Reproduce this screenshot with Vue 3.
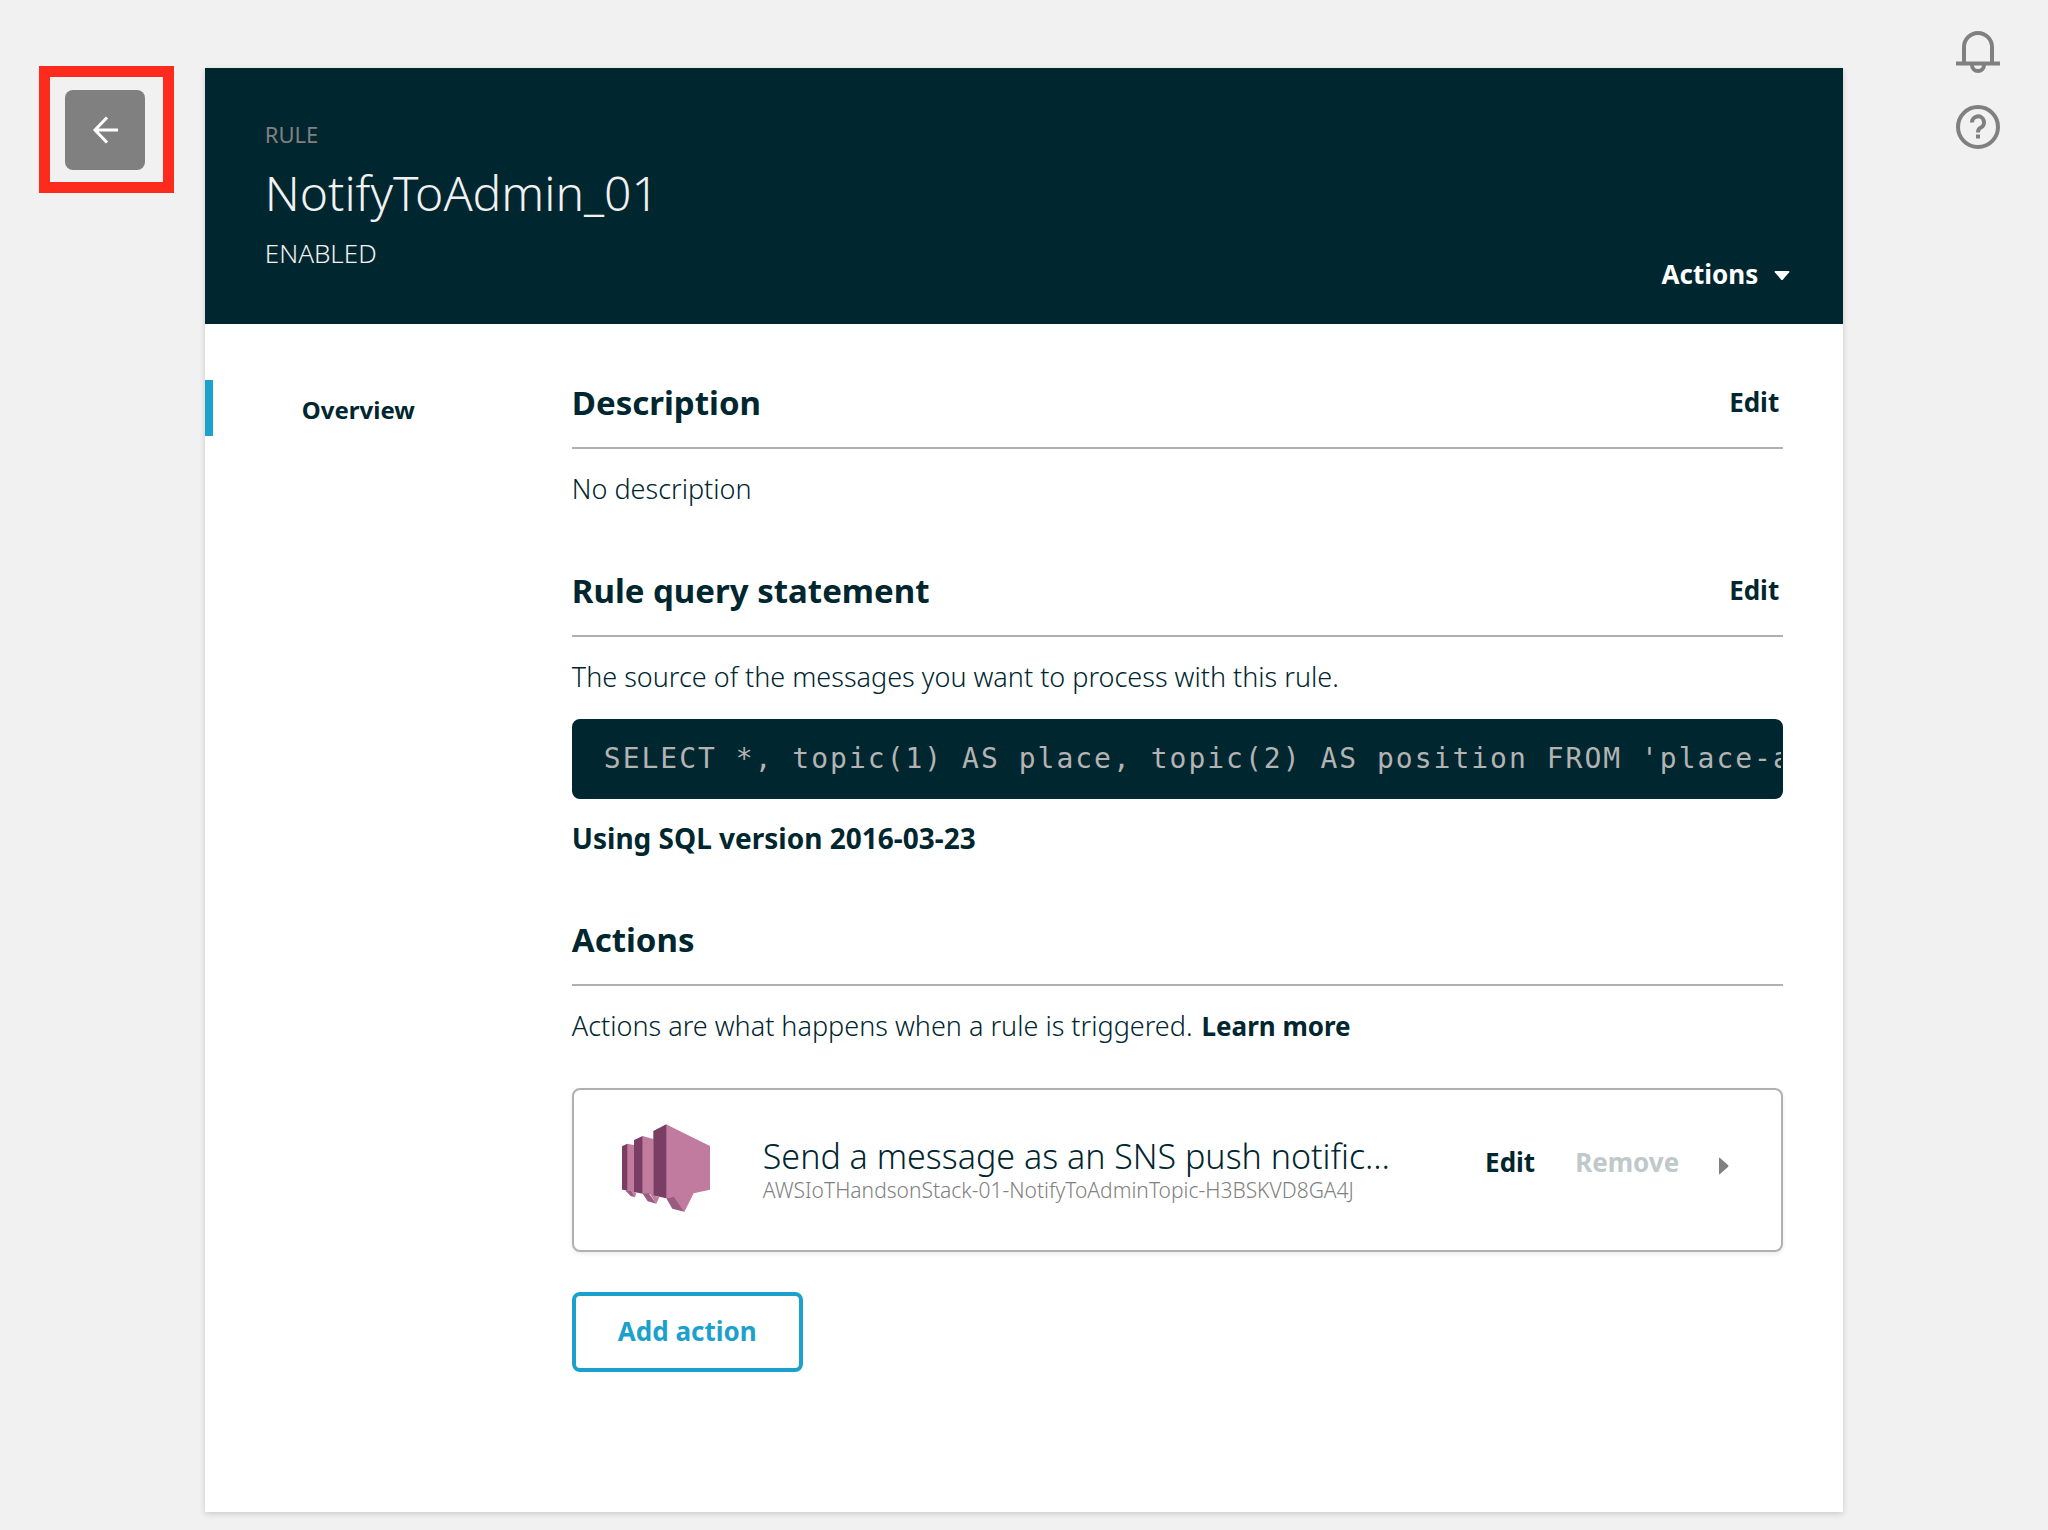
<script setup>
import { ref } from 'vue'

const rule = {
  name: 'NotifyToAdmin_01',
  status: 'ENABLED',
  description: 'No description',
  query: "SELECT *, topic(1) AS place, topic(2) AS position FROM 'place-a",
  sqlVersion: '2016-03-23'
}

const actions = ref([
  {
    title: 'Send a message as an SNS push notific…',
    resource: 'AWSIoTHandsonStack-01-NotifyToAdminTopic-H3BSKVD8GA4J'
  }
])
</script>

<template>
  <div class="page">
    <div class="rail-left">
      <div class="highlight">
        <button class="back" type="button" aria-label="Back">
          <svg width="28" height="28" viewBox="0 0 28 28" fill="none" stroke="currentColor" stroke-width="3">
            <path d="M16 1.5 4 14l12 12.5M4 14h23" />
          </svg>
        </button>
      </div>
    </div>

    <main class="panel">
      <header class="hero">
        <div class="hero-text">
          <p class="kind">RULE</p>
          <h1>{{ rule.name }}</h1>
          <p class="status">{{ rule.status }}</p>
        </div>
        <button class="text-button menu" type="button">
          Actions
          <svg width="16" height="10" viewBox="0 0 16 10" fill="currentColor">
            <path d="M1.5 0h13q1.500 0 .7 1.200L9 8.500q-1 1-2 0L.8 1.200Q0 0 1.500 0z" />
          </svg>
        </button>
      </header>

      <div class="body">
        <nav class="side">
          <a class="side-link" href="#overview">Overview</a>
        </nav>

        <div id="overview" class="content">
          <section>
            <div class="section-head">
              <h2>Description</h2>
              <button class="text-button" type="button">Edit</button>
            </div>
            <p class="copy">{{ rule.description }}</p>
          </section>

          <section>
            <div class="section-head">
              <h2>Rule query statement</h2>
              <button class="text-button" type="button">Edit</button>
            </div>
            <p class="copy">The source of the messages you want to process with this rule.</p>
            <pre class="query"><code>{{ rule.query }}</code></pre>
            <p class="version">Using SQL version {{ rule.sqlVersion }}</p>
          </section>

          <section>
            <div class="section-head">
              <h2>Actions</h2>
            </div>
            <p class="copy">
              Actions are what happens when a rule is triggered.
              <a class="more" href="#learn-more">Learn more</a>
            </p>

            <article v-for="action in actions" :key="action.resource" class="action">
              <svg class="action-icon" width="88" height="92" viewBox="0 0 88 92">
                <g fill="#c17b9e">
                  <path d="M5 19.700 12 21v47l2.300 1.300-1.300 4-4-7H5z" />
                  <path d="M20.500 12 31.500 15v56.500l5.800 1.800-3 6.400L28 70h-7.500z" />
                  <path d="M44 .3 88 22v43.700l-16.300 3.600-9.400 18.700L52 73.300l-8 1z" />
                </g>
                <g fill="#995b80">
                  <path d="M3 66.300h6l4 7-4.300-1.300z" />
                  <path d="M20.700 69.700l6-.4 7.600 10.400-8.600-2.400z" />
                  <path d="M44.300 74.300 52 72.700l10.300 15-12-3z" />
                </g>
                <g fill="#7a3e65">
                  <path d="M0 22.300l5.300-2.600v46.600L0 65.700z" />
                  <path d="M12 16l8.700-4v57.700L12 68z" />
                  <path d="M31.300 7l13-6.700v74l-13-2.800z" />
                </g>
              </svg>
              <div class="action-text">
                <h3>{{ action.title }}</h3>
                <p>{{ action.resource }}</p>
              </div>
              <div class="action-controls">
                <button class="text-button" type="button">Edit</button>
                <button class="text-button" type="button" disabled>Remove</button>
                <button class="expand" type="button" aria-label="Show details">
                  <svg width="10" height="18" viewBox="0 0 10 18" fill="currentColor">
                    <path d="M0 1.500Q0 0 1 1l8 7q1 1 0 2l-8 7q-1 1-1-.5z" />
                  </svg>
                </button>
              </div>
            </article>

            <button class="add" type="button">Add action</button>
          </section>
        </div>
      </div>
    </main>

    <div class="rail-right">
      <button class="tool" type="button" aria-label="Notifications">
        <svg width="44" height="44" viewBox="0 0 44 44" fill="none" stroke="currentColor" stroke-width="4">
          <path d="M8 33V17a14 14 0 0 1 28 0v16M0 33.500h44M16 35a6 6 0 0 0 12 0" />
        </svg>
      </button>
      <button class="tool" type="button" aria-label="Help">
        <svg width="44" height="44" viewBox="0 0 44 44" fill="none" stroke="currentColor" stroke-width="4">
          <circle cx="22" cy="22" r="20" />
          <path d="M16 17.500a6 6 0 1 1 8.500 5.300Q22 24 22 27.500M22 29.500v4" />
        </svg>
      </button>
    </div>
  </div>
</template>

<style>
body {
  background: #f1f1f1;
}
</style>

<style scoped>
.page {
  display: grid;
  grid-template-columns: 1fr 8fr 1fr;
  align-items: start;
  padding-bottom: 18px;
  color: #00262f;
  font-family: "Noto Sans", "Open Sans", sans-serif;
}

h1,
h2,
h3,
p,
pre {
  margin: 0;
}

button {
  margin: 0;
  padding: 0;
  border: 0;
  background: none;
  color: inherit;
  font-family: inherit;
  cursor: pointer;
}

svg {
  display: block;
}

.rail-left {
  padding: 66px 0 0 39px;
}

.highlight {
  display: inline-block;
  padding: 13px 18px 12px 15px;
  border: 11px solid #fd2b1d;
}

.back {
  display: flex;
  align-items: center;
  justify-content: center;
  width: 80px;
  height: 80px;
  border-radius: 8px;
  background: #808080;
  color: #fff;
}

.rail-right {
  display: flex;
  flex-direction: column;
  align-items: flex-end;
  gap: 31px;
  padding: 30px 48px 0 0;
}

.tool {
  color: #808080;
}

.panel {
  min-width: 0;
  margin-top: 68px;
  background: #fff;
  box-shadow: 0 2px 6px rgba(0, 0, 0, 0.16);
}

.hero {
  display: flex;
  align-items: flex-end;
  justify-content: space-between;
  padding: 51px 53px 32px 60px;
  background: #00262f;
  color: #f1f1f1;
}

.hero-text {
  padding-bottom: 21px;
}

.kind {
  color: #808080;
  font-size: 22px;
  line-height: 30px;
}

h1 {
  margin: 12px 0 10px;
  font-size: 48px;
  font-weight: 300;
  line-height: 64px;
}

.status {
  font-size: 26px;
  font-weight: 350;
  line-height: 36px;
}

.text-button {
  font-size: 26px;
  font-weight: 700;
  line-height: 36px;
}

.text-button:disabled {
  color: #bfc8ca;
  cursor: default;
}

.menu {
  display: flex;
  align-items: center;
  gap: 16px;
  color: #fff;
}

.menu svg {
  margin-top: 4px;
}

.body {
  display: flex;
  padding: 56px 60px 140px 0;
}

.side {
  flex: 0 0 367px;
}

.side-link {
  display: block;
  padding: 4px 0 0 89px;
  border-left: 8px solid #1ba1cb;
  color: inherit;
  font-size: 24px;
  font-weight: 700;
  line-height: 52px;
  text-decoration: none;
}

.content {
  display: flex;
  flex: 1;
  flex-direction: column;
  gap: 62px;
  min-width: 0;
}

.section-head {
  display: flex;
  align-items: center;
  justify-content: space-between;
  padding: 0 4px 21px 0;
  border-bottom: 2px solid #b0b0b0;
}

.section-head .text-button {
  padding-bottom: 2px;
}

h2 {
  font-size: 33px;
  font-weight: 700;
  line-height: 46px;
}

.copy {
  margin-top: 23px;
  font-size: 27px;
  font-weight: 300;
  line-height: 34px;
}

.more {
  margin-left: 2px;
  color: inherit;
  font-size: 26px;
  font-weight: 700;
  text-decoration: none;
}

.query {
  overflow: hidden;
  margin-top: 25px;
  padding-left: 30px;
  border: 2px solid #00262f;
  border-radius: 8px;
  background: #00262f;
  color: #b3b3b3;
  font-size: 28px;
  line-height: 76px;
}

.query code {
  font-family: "DejaVu Sans Mono", monospace;
  letter-spacing: 2px;
}

.version {
  margin-top: 22px;
  font-size: 28px;
  font-weight: 700;
  line-height: 34px;
}

.action {
  display: flex;
  align-items: center;
  margin-top: 45px;
  padding: 34px 52px 34px 48px;
  border: 2px solid #b0b0b0;
  border-radius: 8px;
  box-shadow: 0 2px 4px rgba(0, 0, 0, 0.08);
}

.action-icon {
  flex: none;
}

.action-text {
  flex: 1;
  min-width: 0;
  margin: 0 40px 0 53px;
}

h3 {
  font-size: 34px;
  font-weight: 300;
  line-height: 40px;
}

.action-text p {
  color: #808080;
  font-size: 21px;
  font-weight: 350;
  line-height: 28px;
  overflow-wrap: anywhere;
}

.action-controls {
  display: flex;
  align-items: center;
  gap: 40px;
  padding-bottom: 16px;
}

.expand {
  padding-top: 8px;
  color: #808080;
}

.add {
  display: block;
  height: 80px;
  margin-top: 40px;
  padding: 0 42px 2px;
  border: 4px solid #1ba1cb;
  border-radius: 8px;
  color: #1ba1cb;
  font-size: 26px;
  font-weight: 700;
}
</style>
